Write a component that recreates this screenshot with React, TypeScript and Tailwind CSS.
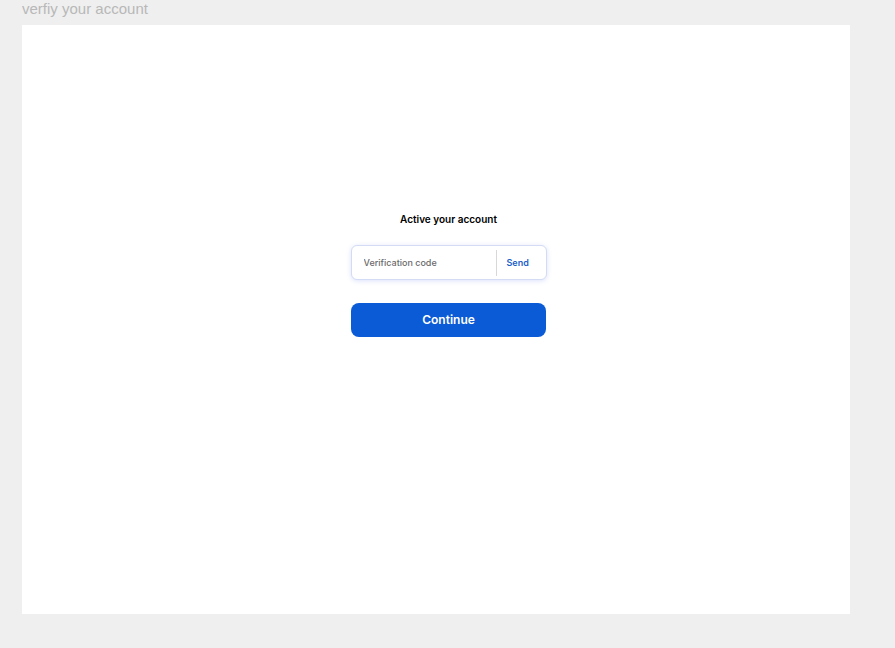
import React from "react";

export default function App() {
  return (
    <div className="min-h-[648px] w-[895px] bg-[#efefef] font-['Inter',sans-serif]">
      <div className="pl-[22px] pt-[1px] text-[15px] leading-[16px] text-[#b8b8b8] font-['Liberation_Sans',sans-serif]">
        verfiy your account
      </div>
      <div className="ml-[22px] mt-[8px] w-[828px] h-[589px] bg-white">
        <div className="flex flex-col items-center pl-[25px] pt-[187px]">
          <h1 className="text-[10px] leading-[14px] font-semibold text-black">Active your account</h1>
          <div className="mt-[19px] flex h-[35px] w-[196px] items-center rounded-[6px] border border-[#d3dbf5] bg-white shadow-[0_1px_5px_rgba(80,110,230,0.2)]">
            <input
              className="h-full min-w-0 flex-1 bg-transparent pl-[12px] text-[9px] font-medium text-[#333] outline-none placeholder:text-[#6a6a6a]"
              placeholder="Verification code"
            />
            <div className="h-[26px] w-px bg-[#d8d8d8]" />
            <button className="w-[49px] pl-[10px] text-left text-[9px] font-semibold text-[#1c5fc9]">Send</button>
          </div>
          <button className="mt-[23px] h-[34px] w-[195px] rounded-[8px] bg-[#0b5ad6] text-[12px] font-semibold text-white">
            Continue
          </button>
        </div>
      </div>
    </div>
  );
}
